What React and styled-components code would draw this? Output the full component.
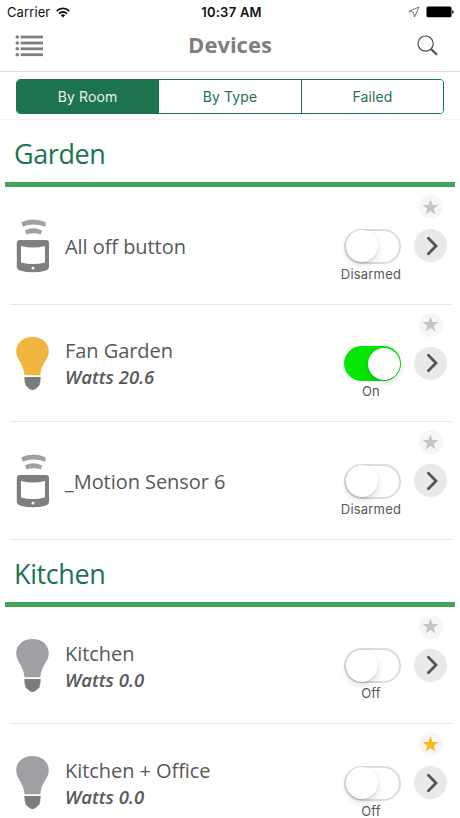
import React, { useState } from 'react';
import styled, { createGlobalStyle } from 'styled-components';

const GlobalStyle = createGlobalStyle`
  * {
    box-sizing: border-box;
  }
  body {
    margin: 0;
    background: #fff;
    overflow: hidden;
  }
  svg {
    display: block;
  }
`;

const Screen = styled.div`
  width: 460px;
  height: 818px;
  overflow: hidden;
  background: #fff;
  font-family: "Open Sans", "Noto Sans", sans-serif;
  color: #58585a;
`;

const StatusBar = styled.div`
  display: grid;
  grid-template-columns: 1fr auto 1fr;
  align-items: center;
  height: 24px;
  padding: 0 6px 0 7px;
  font-family: Inter, "Liberation Sans", sans-serif;
  font-size: 13px;
  line-height: 24px;
  color: #111;
`;

const Carrier = styled.div`
  display: flex;
  align-items: center;
  gap: 6px;
  letter-spacing: 0.1px;
`;

const Clock = styled.div`
  padding-left: 2px;
  font-weight: 600;
  letter-spacing: 0.25px;
`;

const StatusIcons = styled.div`
  display: flex;
  align-items: center;
  justify-content: flex-end;
  gap: 6px;
`;

const NavBar = styled.header`
  display: grid;
  grid-template-columns: 60px 1fr 60px;
  align-items: center;
  height: 48px;
  padding: 0 7px 4px;
  border-bottom: 1px solid #d9dddb;
`;

const NavTitle = styled.h1`
  margin: 0;
  padding-bottom: 3px;
  text-align: center;
  font-size: 22px;
  line-height: 30px;
  font-weight: 700;
  color: #7f7f80;
`;

const NavButton = styled.button`
  display: flex;
  justify-content: ${({ right }) => (right ? 'flex-end' : 'flex-start')};
  padding: ${({ right }) => (right ? '0 15px 0 0' : '1px 0 0 8px')};
  border: 0;
  background: none;
`;

const FilterBar = styled.div`
  height: 48px;
  padding: 7px 16px 0;
  border-bottom: 1px solid #f3f5f4;
`;

const Segments = styled.div`
  display: grid;
  grid-template-columns: 141px 143px 1fr;
  height: 35px;
  border: 1px solid #1d734f;
  border-radius: 4px;
  overflow: hidden;
`;

const Segment = styled.button`
  padding: 0;
  border: 0;
  border-left: ${({ first }) => (first ? '0' : '1px solid #1d734f')};
  background: ${({ active }) => (active ? '#1d734d' : '#fff')};
  color: ${({ active }) => (active ? '#e9f5ee' : '#1d734f')};
  font-family: Inter, "Liberation Sans", sans-serif;
  font-size: 14px;
  letter-spacing: 0.1px;
`;

const SectionTitle = styled.h2`
  height: 67px;
  margin: 0 5px;
  padding: 15px 9px 0;
  border-bottom: 5px solid #43a55a;
  font-size: 27px;
  line-height: 38px;
  font-weight: 400;
  letter-spacing: -0.4px;
  color: #1d734f;
`;

const Row = styled.div`
  display: flex;
  height: 117.6px;
  margin: 0 8px 0 10px;
  padding: 0 5px 0 6px;
  border-bottom: 1px solid #e8e8e9;
`;

const DeviceIcon = styled.div`
  width: 49px;
  padding-top: 32px;
`;

const DeviceText = styled.div`
  flex: 1;
  display: flex;
  flex-direction: column;
  justify-content: center;
  padding-top: 2px;
  font-size: 20px;
  line-height: 27px;
  white-space: nowrap;
`;

const DeviceName = styled.div`
  letter-spacing: -0.06px;
`;

const DeviceWatts = styled.div`
  font-size: 18.5px;
  line-height: 26px;
  font-weight: 600;
  font-style: italic;
`;

const SwitchColumn = styled.div`
  display: flex;
  flex-direction: column;
  align-items: center;
  width: 80px;
  margin-right: 3px;
  padding-top: 41.5px;
`;

const SwitchTrack = styled.button`
  display: flex;
  align-items: center;
  justify-content: ${({ on }) => (on ? 'flex-end' : 'flex-start')};
  width: 57px;
  height: 35px;
  margin-left: 3px;
  padding: ${({ on }) => (on ? '0 1px' : '0')};
  border: ${({ on }) => (on ? '0' : '2px solid #dcdcdd')};
  border-radius: 18px;
  background: ${({ on }) => (on ? '#05e607' : '#fff')};
`;

const SwitchKnob = styled.span`
  width: 32px;
  height: 32px;
  flex: none;
  border-radius: 50%;
  background: #fff;
  box-shadow: 0 3px 6px rgba(0, 0, 0, 0.14), 0 1px 1px rgba(0, 0, 0, 0.12);
`;

const SwitchLabel = styled.div`
  margin-top: 2px;
  font-family: Inter, "Liberation Sans", sans-serif;
  font-size: 13px;
  line-height: 16px;
  letter-spacing: 0.2px;
  white-space: nowrap;
`;

const ActionColumn = styled.div`
  display: flex;
  flex-direction: column;
  align-items: center;
  gap: 10px;
  width: 33px;
  padding-top: 8px;
`;

const RoundButton = styled.button`
  display: flex;
  align-items: center;
  justify-content: center;
  width: ${({ size }) => size}px;
  height: ${({ size }) => size}px;
  padding: 0;
  border: 0;
  border-radius: 50%;
  background: ${({ size }) => (size > 30 ? '#ebe9e8' : '#f6f6f6')};
`;

const WifiIcon = () => (
  <svg width="14" height="11" viewBox="0 0 14 11" fill="none" stroke="#111" strokeWidth="1.9">
    <path d="M0.7 4.1C4.2 0.5 9.8 0.5 13.3 4.1" />
    <path d="M3 6.6C5.2 4.4 8.8 4.4 11 6.6" />
    <path d="M7 10.4L4.8 8.2Q7 6.3 9.2 8.2Z" fill="#111" stroke="none" />
  </svg>
);

const LocationIcon = () => (
  <svg width="12" height="12" viewBox="0 0 12 12" fill="none" stroke="#666" strokeWidth="0.9">
    <path d="M11 1L0.9 5.4L5.5 6.4L6.4 11Z" strokeLinejoin="round" />
  </svg>
);

const BatteryIcon = () => (
  <svg width="28" height="12" viewBox="0 0 28 12">
    <rect x="0.5" y="0.6" width="25" height="10.6" rx="1.5" />
    <path d="M26.2 4Q27.6 4.5 27.6 5.9T26.2 7.9Z" />
  </svg>
);

const MenuIcon = () => (
  <svg width="28" height="22" viewBox="0 0 28 22" fill="#7f7f80">
    {[2, 8, 13.8, 19.7].map(y => (
      <g key={y}>
        <circle cx="2.3" cy={y} r="1.8" />
        <rect x="5.6" y={y - 1.4} width="22.4" height="2.8" />
      </g>
    ))}
  </svg>
);

const SearchIcon = () => (
  <svg width="21" height="21" viewBox="0 0 21 21" fill="none" stroke="#4f4f50">
    <circle cx="8.6" cy="8.6" r="7.6" strokeWidth="1.2" />
    <path d="M13.8 13.8L20 19.8" strokeWidth="2.2" />
  </svg>
);

const SensorIcon = () => (
  <svg width="34" height="55" viewBox="0 0 34 55">
    <g fill="#a0a0a2">
      <path d="M5.3 3.2Q17 -2.2 29.7 3.2L29.4 7.8Q17 3.2 6.7 7.8Z" />
      <path d="M9 11.4Q17.2 7.2 26 11.4L24.8 15.6Q17.2 12.8 10.5 15.6Z" />
    </g>
    <path
      fill="#7f7f81"
      fillRule="evenodd"
      d="M4 21H30Q33 21 33 24V47.5Q33 50.5 30 51.4Q17 55.3 4 51.4Q0.8 50.5 0.8 47.5V24Q0.8 21 4 21ZM5 27V43.4Q17 46.5 29 43.4V27Q17 30 5 27Z"
    />
    <circle cx="17" cy="49.2" r="1.4" fill="#fff" />
  </svg>
);

const BulbIcon = ({ lit }) => (
  <svg width="34" height="54" viewBox="0 0 34 54">
    <path
      fill={lit ? '#f2b53f' : '#a0a0a4'}
      d="M16.5 0C7 0 0.2 6 0.2 14.4C0.2 22.5 7.8 26.5 8.5 38.3H24.3C25 26.5 32.8 22.5 32.8 14.4C32.8 6 26 0 16.5 0Z"
    />
    <path
      fill="#7c7c7e"
      d="M8.4 40H24.6V43L24.1 43.8L24.5 45.2L23.5 46.5L23.8 48L21.2 50.5Q19 53 16.5 53T11.8 50.5L9.2 48L9.5 46.5L8.5 45.2L8.9 43.8L8.4 43Z"
    />
  </svg>
);

const StarIcon = ({ active }) => (
  <svg width="17" height="17" viewBox="0 0 24 24" fill={active ? '#fdb913' : '#c6c6c7'}>
    <path d="M12 0.4L14.8 8.4L23.3 8.6L16.6 13.8L19 22L12 17.1L5 22L7.4 13.8L0.7 8.6L9.2 8.4Z" />
  </svg>
);

const ChevronIcon = () => (
  <svg width="14" height="20" viewBox="0 0 14 20" fill="none" stroke="#555557" strokeWidth="2.8">
    <path d="M4.4 2.3L12 10L4.4 17.7" strokeLinecap="round" />
  </svg>
);

const rooms = [
  {
    name: 'Garden',
    devices: [
      { name: 'All off button', type: 'sensor', state: 'Disarmed' },
      { name: 'Fan Garden', type: 'bulb', watts: '20.6', state: 'On' },
      { name: '_Motion Sensor 6', type: 'sensor', state: 'Disarmed' },
    ],
  },
  {
    name: 'Kitchen',
    devices: [
      { name: 'Kitchen', type: 'bulb', watts: '0.0', state: 'Off' },
      { name: 'Kitchen + Office', type: 'bulb', watts: '0.0', state: 'Off', favorite: true },
    ],
  },
];

const filters = ['By Room', 'By Type', 'Failed'];

const DeviceRow = ({ name, type, watts, state, favorite }) => {
  const on = state === 'On';
  return (
    <Row>
      <DeviceIcon>
        {type === 'sensor' ? <SensorIcon /> : <BulbIcon lit={on} />}
      </DeviceIcon>
      <DeviceText>
        <DeviceName>{name}</DeviceName>
        {watts && <DeviceWatts>Watts {watts}</DeviceWatts>}
      </DeviceText>
      <SwitchColumn>
        <SwitchTrack on={on}>
          <SwitchKnob />
        </SwitchTrack>
        <SwitchLabel>{state}</SwitchLabel>
      </SwitchColumn>
      <ActionColumn>
        <RoundButton size={24}>
          <StarIcon active={favorite} />
        </RoundButton>
        <RoundButton size={33}>
          <ChevronIcon />
        </RoundButton>
      </ActionColumn>
    </Row>
  );
};

const App = () => {
  const [filter, setFilter] = useState('By Room');
  return (
    <Screen>
      <GlobalStyle />
      <StatusBar>
        <Carrier>
          Carrier
          <WifiIcon />
        </Carrier>
        <Clock>10:37 AM</Clock>
        <StatusIcons>
          <LocationIcon />
          <BatteryIcon />
        </StatusIcons>
      </StatusBar>
      <NavBar>
        <NavButton><MenuIcon /></NavButton>
        <NavTitle>Devices</NavTitle>
        <NavButton right><SearchIcon /></NavButton>
      </NavBar>
      <FilterBar>
        <Segments>
          {filters.map((label, i) => (
            <Segment
              key={label}
              first={i === 0}
              active={label === filter}
              onClick={() => setFilter(label)}
            >
              {label}
            </Segment>
          ))}
        </Segments>
      </FilterBar>
      {rooms.map(room => (
        <section key={room.name}>
          <SectionTitle>{room.name}</SectionTitle>
          {room.devices.map(device => <DeviceRow key={device.name} {...device} />)}
        </section>
      ))}
    </Screen>
  );
};

export default App;
